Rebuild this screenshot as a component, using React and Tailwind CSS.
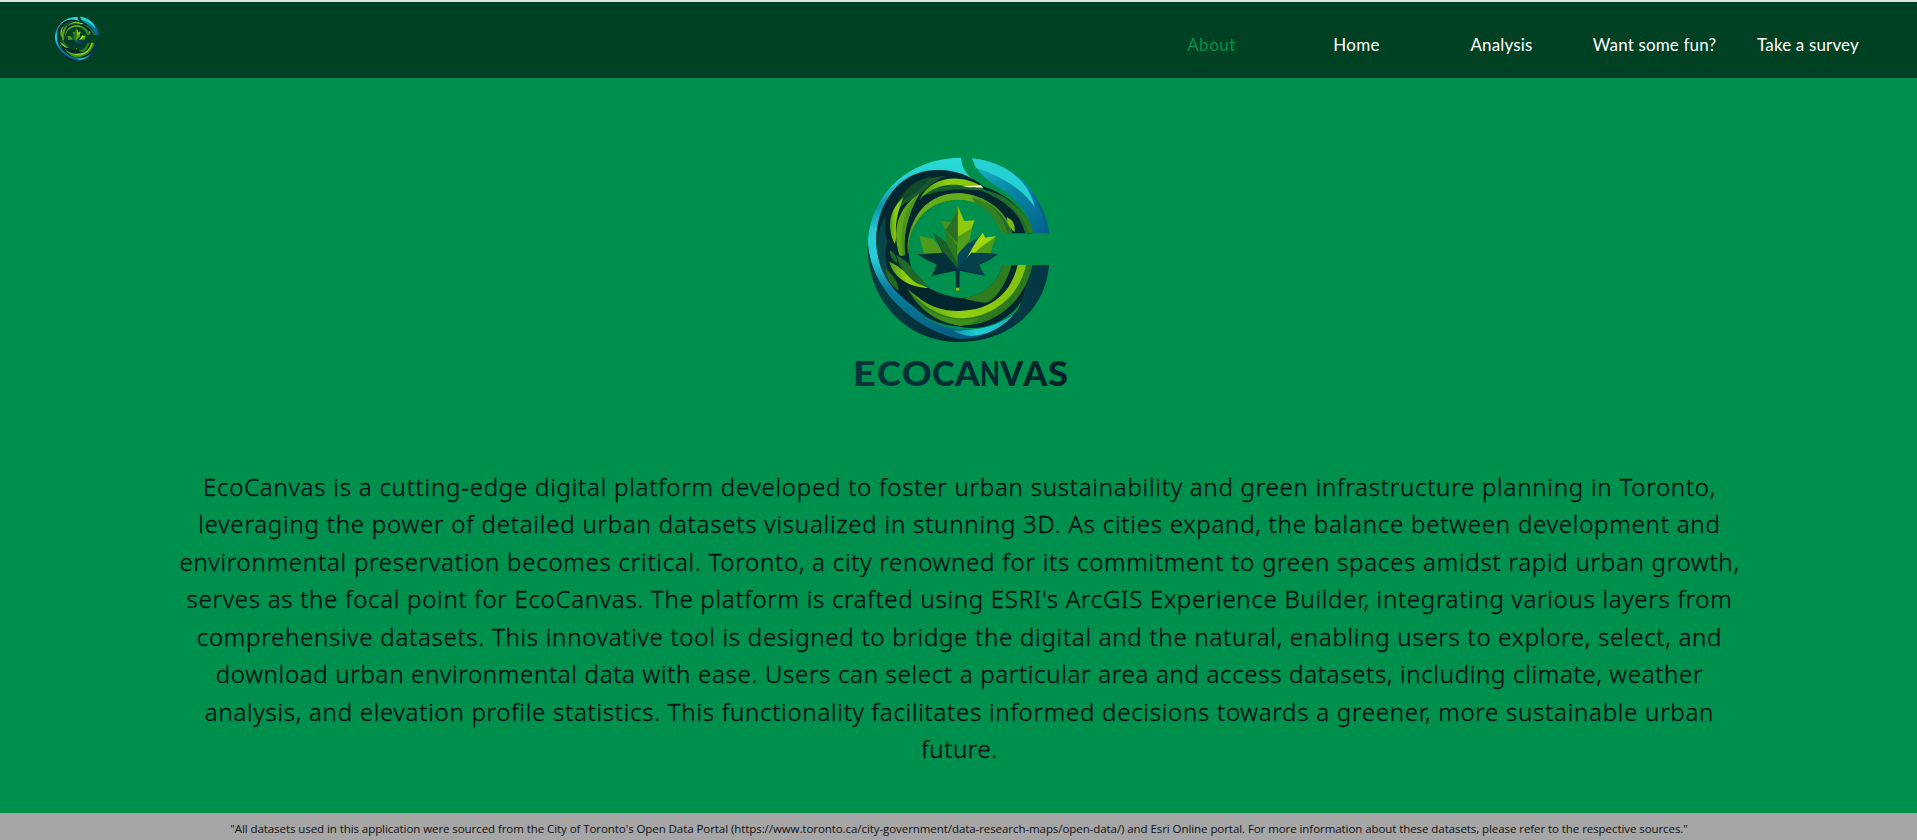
import React from "react";

const paragraph = [
  { text: "EcoCanvas is a cutting-edge digital platform developed to foster urban sustainability and green infrastructure planning in Toronto,", spacing: "tracking-[0.777px]" },
  { text: "leveraging the power of detailed urban datasets visualized in stunning 3D. As cities expand, the balance between development and", spacing: "tracking-[0.798px]" },
  { text: "environmental preservation becomes critical. Toronto, a city renowned for its commitment to green spaces amidst rapid urban growth,", spacing: "tracking-[0.771px]" },
  { text: "serves as the focal point for EcoCanvas. The platform is crafted using ESRI's ArcGIS Experience Builder, integrating various layers from", spacing: "tracking-[0.727px]" },
  { text: "comprehensive datasets. This innovative tool is designed to bridge the digital and the natural, enabling users to explore, select, and", spacing: "tracking-[0.741px]" },
  { text: "download urban environmental data with ease. Users can select a particular area and access datasets, including climate, weather", spacing: "tracking-[0.7px]" },
  { text: "analysis, and elevation profile statistics. This functionality facilitates informed decisions towards a greener, more sustainable urban", spacing: "tracking-[0.75px]" },
  { text: "future.", spacing: "tracking-[0.6px]" },
];

const links = [
  { label: "About", width: "w-[145px]", look: "text-[#009048] tracking-[0.5px]" },
  { label: "Home", width: "w-[145px]", look: "text-white tracking-[0.25px]" },
  { label: "Analysis", width: "w-[145px]", look: "text-white tracking-[0.15px]" },
  { label: "Want some fun?", width: "w-[161px]", look: "text-white tracking-[0.15px]" },
  { label: "Take a survey", width: "w-[146px]", look: "text-white tracking-[0.15px]" },
];

/* Letter, start and advance of each glyph of the wordmark. */
const wordmark = [
  ["E", 8, 69],
  ["C", 81, 72],
  ["O", 155, 90],
  ["C", 246, 68],
  ["A", 314, 75],
  ["N", 390, 60],
  ["V", 451, 69],
  ["A", 520, 72],
  ["S", 594, 60],
];

function Emblem({ id }) {
  const u = (name) => `url(#${id}-${name})`;
  return (
    <g>
      <defs>
        <linearGradient id={`${id}-left`} x1="0" y1="0" x2="0" y2="1">
          <stop offset="0" stopColor="#2bdcd6" />
          <stop offset="0.13" stopColor="#25cdd0" />
          <stop offset="0.27" stopColor="#1193ae" />
          <stop offset="0.4" stopColor="#27c8d4" />
          <stop offset="0.55" stopColor="#27cdd8" />
          <stop offset="0.72" stopColor="#0b7f9f" />
          <stop offset="1" stopColor="#045d80" />
        </linearGradient>
        <linearGradient id={`${id}-right`} x1="0" y1="0" x2="1" y2="1">
          <stop offset="0" stopColor="#22b9c9" />
          <stop offset="0.45" stopColor="#0788a6" />
          <stop offset="1" stopColor="#04618b" />
        </linearGradient>
        <linearGradient id={`${id}-tail`} x1="0" y1="0" x2="1" y2="0">
          <stop offset="0" stopColor="#0896ae" />
          <stop offset="0.4" stopColor="#22cdd5" />
          <stop offset="1" stopColor="#17b6c4" />
        </linearGradient>
        <linearGradient id={`${id}-navy`} x1="0" y1="0" x2="1" y2="0">
          <stop offset="0" stopColor="#073d45" />
          <stop offset="0.5" stopColor="#022730" />
          <stop offset="0.88" stopColor="#043b47" />
          <stop offset="1" stopColor="#022c36" />
        </linearGradient>
        <linearGradient id={`${id}-lime`} x1="0" y1="0" x2="1" y2="0">
          <stop offset="0" stopColor="#4f9d16" />
          <stop offset="0.45" stopColor="#93cf0e" />
          <stop offset="1" stopColor="#83c20d" />
        </linearGradient>
      </defs>

      {/* outer ring */}
      <path d="M53 315C50 480 170 606 325 606C475 606 585 515 597 375H520L505 480L330 560L100 430Z" fill={u("navy")} />
      <path d="M333 53C180 54 66 155 54 300C55 370 85 425 120 470C170 530 245 580 330 597C430 597 500 530 516 478C450 565 310 580 230 532C150 470 82 390 79 310C80 235 105 165 165 120C225 82 310 85 371 119C347 102 335 80 333 53Z" fill={u("left")} />
      <path d="M310 572C365 574 450 556 492 522C465 555 425 583 365 588C343 587 325 580 310 572Z" fill={u("tail")} />

      {/* inner disc behind the leaves */}
      <path d="M79 300C78 215 130 98 248 91C310 86 365 108 400 139C475 163 530 215 551 280H456C435 215 385 178 322 179C240 181 178 245 176 330C177 360 180 377 188 390L236 444C270 462 305 472 335 474C400 470 442 430 458 375H547C535 420 520 460 514 490C455 560 310 580 210 512C120 455 80 390 79 300Z" fill="#02262d" />
      <path d="M82 315C80 350 100 405 130 438C115 390 98 355 112 307C103 270 105 250 108 225C90 255 82 285 82 315Z" fill="#08464a" />
      <path d="M106 386C110 415 125 438 145 452C148 430 130 405 106 386Z" fill="#226c20" />

      {/* gap between the ring and the lower leaves */}
      <path d="M188 503C260 578 440 592 514 482C510 495 507 505 500 513C415 590 270 588 188 503Z" fill="#00904d" />

      {/* left leaves */}
      <path d="M129 232C139 174 191 113 286 108C240 125 220 165 183 180C157 190 143 210 129 232Z" fill="#18572b" />
      <path d="M129 232C139 174 180 120 245 110C225 128 215 150 175 170C155 182 143 210 129 232Z" fill="#12492d" />
      <path d="M160 172C113 214 112 268 134 311C142 296 135 272 139 248C143 216 152 197 160 172Z" fill={u("lime")} />
      <path d="M208 161C143 202 124 272 149 347C156 347 162 348 165 344C157 285 174 220 208 161Z" fill="#5fa81a" />
      <path d="M208 161C165 198 148 255 157 345L165 344C158 285 174 220 208 161Z" fill="#4a951c" />
      <path d="M208 179C245 105 335 100 399 142H348C290 127 237 147 208 179Z" fill={u("lime")} />
      <path d="M240 154C275 130 320 132 350 139L400 144C405 149 396 151 381 151C321 146 282 148 225 166Z" fill="#175e2b" />
      <path d="M337 139L393 136L400 143L355 142Z" fill="#edf4b5" />
      <path d="M174 345C163 252 225 154 332 160C405 165 470 210 487 280H456C435 215 385 178 322 179C240 181 178 245 176 330Z" fill="#4f9a20" />
      <path d="M187 270C197 205 255 157 332 160C400 165 456 210 477 280H456C435 215 385 178 322 179C255 180 205 220 187 270Z" fill="#65ad1b" />
      <path d="M365 171C425 190 455 225 472 280H456C445 242 415 208 375 190Z" fill="#347f22" />
      <path d="M365 168C425 185 465 225 487 280H472C455 225 425 190 365 168Z" fill="#236e2a" />
      <path d="M359 140C455 153 531 200 551 280H525C513 223 464 171 359 140Z" fill="#1c6929" />
      <path d="M430 163C495 190 540 230 551 280H536C520 225 480 190 430 163Z" fill="#2b7822" />
      <path d="M471 232C488 239 496 252 494 277C477 261 470 249 471 232Z" fill="#79bc13" />

      {/* lower-left leaves */}
      <path d="M119 330C130 336 141 347 142 370C128 361 119 348 119 330Z" fill="#1c6a27" />
      <path d="M118 365C155 380 193 425 235 444C190 443 132 420 118 365Z" fill={u("lime")} />
      <path d="M139 345C145 375 165 405 200 430L237 443C215 418 188 390 173 367Z" fill="#1e692a" />

      {/* lower sweep */}
      <path d="M335 474C400 468 442 430 458 375H485C466 440 430 488 405 488C375 486 355 478 335 474Z" fill="#2d7c20" />
      <path d="M172 446C225 495 260 512 330 513C430 510 485 455 503 375H547C530 470 445 560 330 556C255 547 205 505 172 446Z" fill="#2b7a20" />
      <path d="M172 446C235 499 265 512 330 513C430 510 485 455 503 375H528C510 465 430 536 325 535C250 525 208 486 172 446Z" fill={u("lime")} />
      <path d="M172 446C205 500 255 532 330 538C350 540 370 537 390 532C370 552 350 556 330 556C265 550 210 505 172 446Z" fill="#3f8f1b" />

      {/* shadow under the lower sweep */}
      <path d="M322 558C420 560 475 510 515 470C512 485 508 492 503 500C455 555 385 575 322 558Z" fill="#02262d" />

      {/* upper-right segment */}
      <path d="M366 55C492 70 581 155 597 280H550C544 235 510 187 465 154C425 130 383 105 366 55Z" fill={u("right")} />
      <path d="M366 55C474 67 540 130 554 202C520 145 445 105 378 84Z" fill="#25d0d2" />
      <path d="M538 151C574 190 592 231 597 280H586C585 237 570 196 538 151Z" fill="#07618a" />
      <path d="M552 376H597C589 445 555 505 499 545C538 490 548 435 552 376Z" fill="#033842" />

      {/* maple leaf */}
      <path d="M323 198L343 243L374 241L362 272L358 312L323 384L289 311L286 270L273 243L303 246Z" fill="#2b7a20" />
      <path d="M323 198L343 243L374 241L362 272L358 299L323 348Z" fill="#8ecb0e" />
      <path d="M323 290L367 265L357 303L323 345Z" fill="#52a01a" />
      <path d="M323 198L303 246L273 243L286 270L323 318Z" fill="#4a941e" />
      <path d="M323 205L303 246L286 270L323 310Z" fill="#296f24" />
      <path d="M323 384L208 288L222 320V342L323 386Z" fill="#45921d" />
      <path d="M208 288L248 296L285 338L222 340Z" fill="#4f9c1c" />
      <path d="M250 279C270 300 285 285 323 384L280 345Z" fill="#08423c" />
      <path d="M250 279L287 305L323 372V384L285 350Z" fill="#17602c" />
      <path d="M394 278C384 305 350 300 323 345V386L366 346Z" fill="#04485a" />
      <path d="M399 278L405 293L438 289L427 320L422 342L323 386C350 370 362 330 399 278Z" fill="#4d9c18" />
      <path d="M399 278L405 293L438 289L390 323L335 378C362 340 370 310 399 278Z" fill="#a1d90b" />
      <path d="M202 343L283 338L323 386L365 338L444 342L417 361L387 374L404 407L329 392L328 452H318L317 392L245 408L260 374L230 360Z" fill="#023139" />
      <path d="M323 386L365 338L444 342L417 361L387 374L404 407Z" fill="#06404d" />
      <path d="M318 443H328V452H318Z" fill="#86c516" />
    </g>
  );
}

function Logo() {
  return (
    <svg className="block h-[250px] w-[220px] overflow-visible" viewBox="0 0 660 750">
      <defs>
        <linearGradient id="word" gradientUnits="userSpaceOnUse" x1="15" y1="0" x2="650" y2="0">
          <stop offset="0" stopColor="#05353b" />
          <stop offset="0.5" stopColor="#022a33" />
          <stop offset="1" stopColor="#021f29" />
        </linearGradient>
      </defs>
      <Emblem id="main" />
      <text y="737" fontFamily="Lato, sans-serif" fontSize="105" fontWeight="900" fill="url(#word)">
        {wordmark.map(([letter, x, advance]) => (
          <tspan key={x} x={x} textLength={advance} lengthAdjust="spacingAndGlyphs">
            {letter}
          </tspan>
        ))}
      </text>
    </svg>
  );
}

export default function App() {
  return (
    <div className="flex h-[840px] w-full flex-col overflow-hidden bg-[#00904d] font-['Open_Sans',sans-serif]">
      <header className="flex h-[78px] shrink-0 items-start justify-between border-t-2 border-[#dce5e0] bg-[#004023] pr-9 pl-[54px]">
        <svg className="mt-[14px] block h-[46px] w-[46px]" viewBox="45 45 565 569">
          <Emblem id="small" />
        </svg>
        <nav className="flex h-[76px] items-center pt-[10px] font-['Lato',sans-serif] text-[17px] leading-6">
          {links.map((l) => (
            <a key={l.label} className={`block text-center whitespace-nowrap ${l.width} ${l.look}`}>
              {l.label}
            </a>
          ))}
        </nav>
      </header>
      <main className="flex flex-1 flex-col items-center pt-[62px]">
        <div className="flex w-full pl-[850px]">
          <Logo />
        </div>
        <p className="mt-[77.5px] pl-[2px] text-center font-['Noto_Sans',sans-serif] text-[24px] leading-[37.5px] font-light whitespace-nowrap text-[#0a0f12] [-webkit-text-stroke:0.35px_#0a0f12]">
          {paragraph.map((l) => (
            <span key={l.text} className={`block ${l.spacing}`}>
              {l.text}
            </span>
          ))}
        </p>
      </main>
      <footer className="flex h-[27px] shrink-0 items-center justify-center bg-[#a6a6a6] pt-1 pl-px text-[11.5px] leading-4 tracking-[-0.069px] whitespace-nowrap text-[#101010]">
        "All datasets used in this application were sourced from the City of Toronto's Open Data Portal
        (https://www.toronto.ca/city-government/data-research-maps/open-data/) and Esri Online portal. For more
        information about these datasets, please refer to the respective sources."
      </footer>
    </div>
  );
}
